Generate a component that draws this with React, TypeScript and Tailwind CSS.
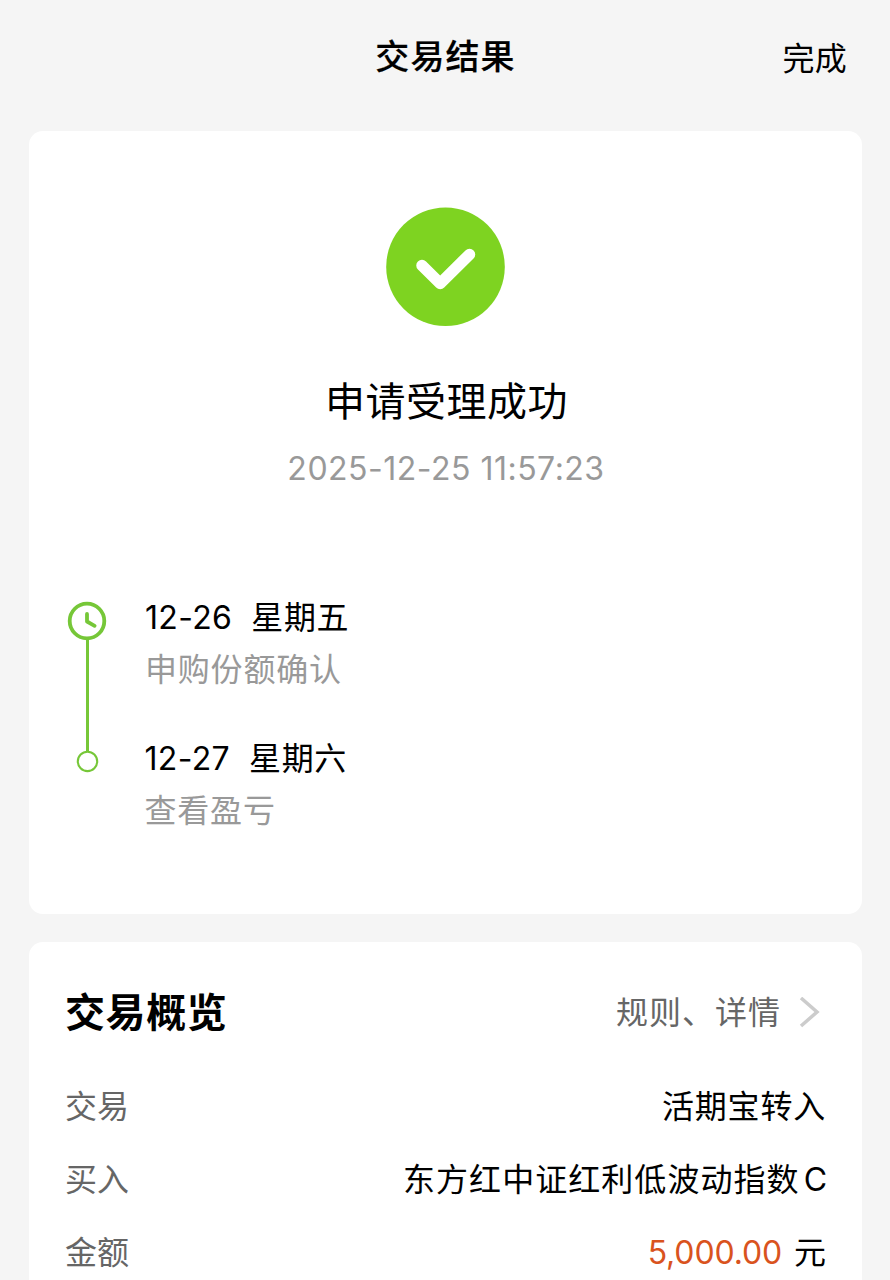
import React from 'react';

function Step({ date, day, note, className }: { date: string; day: string; note: string; className: string }) {
  return (
    <div className={className}>
      <div className="flex h-[52px] gap-[19px] text-[32px] leading-[50px]">
        <span className="tracking-[0.35px]">{date}</span>
        <span className="tracking-[0.6px]">{day}</span>
      </div>
      <div className="h-[50px] text-[32px] leading-[50px] tracking-[0.8px] text-[#999]">{note}</div>
    </div>
  );
}

function Row({ label, children }: { label: string; children: React.ReactNode }) {
  return (
    <div className="mb-[23px] flex h-[50px] justify-between text-[32px] leading-[50px]">
      <span className="text-[#666]">{label}</span>
      {children}
    </div>
  );
}

export default function App() {
  return (
    <main className="h-[1280px] w-[890px] overflow-hidden bg-[#f5f5f5] px-[29px] font-['Inter','Noto_Sans_CJK_SC',sans-serif] text-black">
      <header className="grid h-[131px] grid-cols-3 pt-[33px]">
        <span />
        <h1 className="pl-px text-center text-[34px] leading-[48px] font-medium tracking-[1.1px] [-webkit-text-stroke:0.2px_black]">交易结果</h1>
        <button className="mt-px h-[50px] pr-[14px] text-right text-[32px] leading-[50px] tracking-[0.3px]">完成</button>
      </header>

      <section className="h-[783px] w-[833px] rounded-[14px] bg-white pt-[76px]">
        <svg className="mx-auto block h-[120px] w-[120px]" viewBox="0 0 120 120" fill="none">
          <circle cx="59.5" cy="59.8" r="59.3" fill="#7ed321" />
          <path d="M36 58.5L54.2 76.5L83.5 47.5" stroke="white" strokeWidth="11.5" strokeLinecap="round" strokeLinejoin="round" />
        </svg>
        <h2 className="mt-[45px] pl-[2px] text-center text-[40px] leading-[60px] tracking-[0.5px]">申请受理成功</h2>
        <p className="mt-[12px] pl-px text-center text-[32px] leading-[50px] tracking-[0.5px] text-[#999]">2025-12-25 11:57:23</p>

        <div className="mt-[99px] flex pl-[38px]">
          <svg className="h-[180px] w-[40px]" viewBox="0 0 40 180" fill="none" stroke="#76c738">
            <circle cx="20" cy="28" r="17.3" strokeWidth="3.8" />
            <path d="M20 21V28.5L27.6 32.8" strokeWidth="3.8" strokeLinecap="round" strokeLinejoin="round" />
            <path d="M20.5 46V158" strokeWidth="3" />
            <circle cx="20.5" cy="168.4" r="9.7" strokeWidth="2.1" />
          </svg>
          <div className="ml-[38px]">
            <Step date="12-26" day="星期五" note="申购份额确认" className="h-[141px]" />
            <Step date="12-27" day="星期六" note="查看盈亏" className="-ml-[0.5px] h-[102px]" />
          </div>
        </div>
      </section>

      <section className="mt-[28px] h-[400px] w-[833px] rounded-[14px] bg-white px-[36px] pt-[41px]">
        <div className="flex h-[60px] items-center justify-between">
          <h2 className="text-[40px] leading-[60px] font-bold tracking-[0.6px]">交易概览</h2>
          <button className="flex items-center gap-[18px] text-[32px] leading-[50px] tracking-[1px] text-[#666]">
            <span>规则、详情</span>
            <svg className="mr-[6px] h-[32px] w-[21px]" viewBox="0 0 21 32" fill="none">
              <path d="M2 1L18 15L2 29" stroke="#ccc" strokeWidth="3.5" />
            </svg>
          </button>
        </div>
        <div className="pt-[39px]">
          <Row label="交易"><span className="tracking-[0.8px]">活期宝转入</span></Row>
          <Row label="买入">
            <span className="-mr-px flex gap-[4px]">
              <span className="tracking-[1.05px]">东方红中证红利低波动指数</span>
              <span>C</span>
            </span>
          </Row>
          <Row label="金额">
            <span className="flex gap-[12px]">
              <span className="tracking-[-0.15px] text-[#d9531e]">5,000.00</span>
              <span>元</span>
            </span>
          </Row>
        </div>
      </section>
    </main>
  );
}
